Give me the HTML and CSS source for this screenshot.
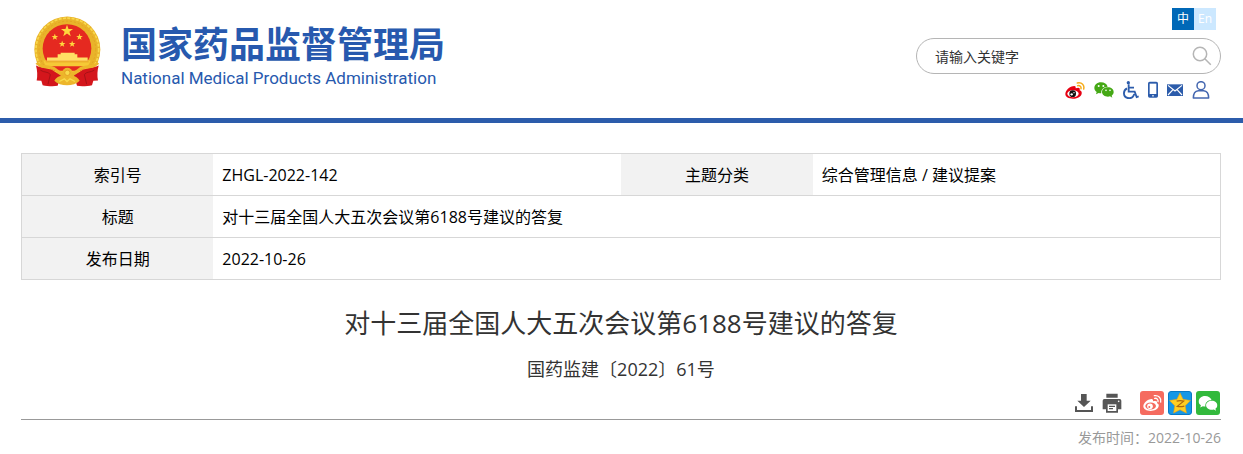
FILE: index.html
```html
<!DOCTYPE html>
<html lang="zh-CN">
<head>
<meta charset="utf-8">
<title>国家药品监督管理局</title>
<link rel="stylesheet" href="styles.css">
</head>
<body>
<svg width="0" height="0" class="defs" aria-hidden="true">
  <symbol id="star" viewBox="-10 -10 20 20"><path d="M0-10 2.4-3.2 9.5-3.1 3.8 1.3 5.9 8.1 0 4-5.9 8.1-3.8 1.3-9.5-3.1-2.4-3.2Z"/></symbol>
  <symbol id="wechat" viewBox="0 0 60 48">
    <path d="M21 1C9 1 1 9 1 18c0 5 3 9 7 12l-2 7 8-4c3 1 5 1 8 1C20 23 29 14 41 14 39 6 31 1 21 1Z"/>
    <path d="M42 16c-10 0-18 6-18 14s8 14 18 14c2 0 4 0 6-1l7 4-2-6c4-3 6-7 6-11 0-8-8-14-17-14Z"/>
    <g class="eye"><circle cx="14" cy="12" r="3"/><circle cx="28" cy="12" r="3"/><circle cx="36" cy="25" r="2.5"/><circle cx="48" cy="25" r="2.5"/></g>
  </symbol>
</svg>
<header class="site-header">
  <a class="brand" href="#">
    <svg class="emblem" viewBox="24 24 204 212" aria-hidden="true">
      <circle cx="127" cy="124" r="99" fill="#e9b32a"/>
      <circle cx="127" cy="124" r="94" fill="none" stroke="#f8d84c" stroke-width="5" stroke-dasharray="9 4"/>
      <circle cx="127" cy="124" r="85" fill="none" stroke="#e3a622" stroke-width="3" stroke-dasharray="6 6"/>
      <circle cx="126" cy="121" r="73" fill="#e52920"/>
      <path d="M55 157h142c-8 20-17 29-33 37H86c-15-8-25-19-31-37Z" fill="#f6c936"/>
      <path d="M98 148v-10h9v-4h42v4h8v10h31v10H66v-10Z" fill="#ffe064"/>
      <path d="M62 161h129" stroke="#e9a42a" stroke-width="3"/>
      <path d="M65 174h123l-22 14H88Z" fill="#e52920"/>
      <g fill="#ffd83d">
        <use href="#star" x="107" y="49" width="38" height="39"/>
        <use href="#star" x="79" y="76" width="21" height="21"/><use href="#star" x="153" y="76" width="21" height="21"/>
        <use href="#star" x="101" y="97" width="21" height="21"/><use href="#star" x="131" y="97" width="21" height="21"/>
      </g>
      <path d="M33 172c14 8 30 8 46 12l28 18-9 31c-14 2-32 1-45-2l-4-13-14-1c3-14 2-30-2-45Z" fill="#d4161c"/>
      <path d="M221 172c-14 8-30 8-46 12l-28 18 9 31c14 2 32 1 45-2l4-13 14-1c-3-14-2-30 2-45Z" fill="#d4161c"/>
      <path d="M46 186c12 8 22 3 30 13l-7 29M208 186c-12 8-22 3-30 13l7 29" fill="none" stroke="#a81216" stroke-width="3"/>
      <path d="M35 164c14 17 40 7 55 19 8 6 14 13 25 13M219 164c-14 17-40 7-55 19-8 6-14 13-25 13" fill="none" stroke="#edb62b" stroke-width="9"/>
      <circle cx="127" cy="194" r="15" fill="#edb62b"/>
      <circle cx="127" cy="194" r="8" fill="#f9da4c" stroke="#e5a126" stroke-width="3"/>
      <path d="M88 218c8-16 24-18 38-9 14-9 30-7 38 9-17 18-59 18-76 0Z" fill="#edb62b"/>
      <path d="M103 220l15-8 8 8 9-8 15 8" fill="none" stroke="#f9da4c" stroke-width="4"/>
    </svg>
    <span class="brand-text">
      <span class="brand-cn">国家药品监督管理局</span>
      <span class="brand-en">National Medical Products Administration</span>
    </span>
  </a>
  <div class="tools">
    <nav class="lang"><a class="on" href="#">中</a><a href="#">En</a></nav>
    <form class="search">
      <input type="text" aria-label="搜索" placeholder="请输入关键字">
      <button type="button" aria-label="搜索"><svg viewBox="0 0 20 20"><circle cx="8" cy="8" r="6.7"/><path d="m12.5 12.5 6.3 6.3"/></svg></button>
    </form>
    <nav class="quick">
      <a href="#" aria-label="微博"><svg width="20" height="18" viewBox="0 0 60 54">
        <path d="M25 16c5-2 8 1 7 6 9-3 14-2 12 6 5 2 7 5 6 10-2 10-15 15-26 15C11 53 1 48 1 39c0-11 16-25 24-23Z" fill="#e60012"/>
        <ellipse cx="24" cy="38" rx="17" ry="10.5" fill="#fff"/><circle cx="23" cy="38" r="10" fill="#111"/><circle cx="20" cy="40" r="3.5" fill="#fff"/><circle cx="27" cy="35" r="2" fill="#fff"/>
        <path d="M37 6c14-3 22 7 19 18M38 14c7-1 11 3 10 9" fill="none" stroke="#f6ac19" stroke-width="4.5" stroke-linecap="round"/></svg></a>
      <a class="green" href="#" aria-label="微信"><svg width="20" height="16"><use href="#wechat"/></svg></a>
      <a href="#" aria-label="无障碍"><svg width="16" height="18" viewBox="0 0 48 54" fill="none" stroke="#2c5cab" stroke-width="5.5"><circle cx="16" cy="5" r="5" fill="#2c5cab" stroke="none"/><path d="M17 10v22h18l6 16 6-2M17 20h16M12 22C-1 29 0 48 14 51c9 2 17-3 20-12"/></svg></a>
      <a href="#" aria-label="手机"><svg width="10" height="18" viewBox="0 0 30 54"><rect y="2" width="30" height="48" rx="5" fill="#2c5cab"/><path d="M5 8h20v31H5z" fill="#fff"/><circle cx="15" cy="44.500" r="2.500" fill="#fff"/></svg></a>
      <a href="#" aria-label="邮箱"><svg width="16" height="18" viewBox="0 0 48 54"><path d="M0 10h48v35H0z" fill="#2c5cab"/><path d="m3 13 21 17 21-17M3 42l15-16M45 42 30 26" fill="none" stroke="#fff" stroke-width="3.500"/></svg></a>
      <a href="#" aria-label="用户"><svg width="18" height="18" viewBox="0 0 54 54" fill="none" stroke="#4467b0" stroke-width="4.500"><circle cx="27" cy="14" r="12"/><path d="M4 51c0-15 5-21 15-22h16c10 1 15 7 15 22Z" stroke-linejoin="round"/></svg></a>
    </nav>
  </div>
</header>
<main class="page">
  <table class="info">
    <colgroup><col class="col-label"><col class="col-value"><col class="col-label"><col class="col-value"></colgroup>
    <tr><th scope="row">索引号</th><td>ZHGL-2022-142</td><th scope="row">主题分类</th><td>综合管理信息 / 建议提案</td></tr>
    <tr><th scope="row">标题</th><td colspan="3">对十三届全国人大五次会议第6188号建议的答复</td></tr>
    <tr><th scope="row">发布日期</th><td colspan="3">2022-10-26</td></tr>
  </table>
  <h1>对十三届全国人大五次会议第6188号建议的答复</h1>
  <p class="doc-no">国药监建〔2022〕61号</p>
  <div class="actions">
    <div class="file-actions">
      <button type="button" aria-label="下载"><svg viewBox="0 0 60 60"><path d="M21 3h17v20h12L30 42 10 23h11Z"/><path d="M3 40h6v11h42V40h6v17H3Z"/></svg></button>
      <button type="button" aria-label="打印"><svg viewBox="0 0 60 60"><path d="M13 2h34v12H13zM7 18h46q5 0 5 5v26H2V23q0-5 5-5ZM12 34h36v25H12z"/><path d="M17 34h26v20H17z" fill="#fff"/><path d="M21 40h18M21 47h12" stroke="#555" stroke-width="3.500"/><circle cx="50" cy="25" r="2.500" fill="#fff"/></svg></button>
    </div>
    <div class="share">
      <a class="weibo" href="#" aria-label="分享到微博"><svg viewBox="0 0 72 72"><path d="M31 25c6-3 9 0 8 6 9-3 14-1 12 6 5 2 6 5 5 9-2 9-13 14-24 14-13 0-22-6-22-14 0-9 12-20 21-21Z" fill="#fff"/><ellipse cx="32" cy="45" rx="16" ry="10.500" fill="#f56b5f"/><circle cx="30" cy="46" r="8.500" fill="#fff"/><circle cx="28" cy="48" r="3" fill="#f56b5f"/><path d="M43 14c13-2 22 8 19 19M44 22c7-1 11 4 10 10" fill="none" stroke="#fff" stroke-width="4" stroke-linecap="round"/></svg></a>
      <a class="qzone" href="#" aria-label="分享到QQ空间"><svg viewBox="0 0 72 72"><path d="m36 3 10 21 24 4-17 17 4 24-21-11-21 11 4-24L2 28l24-4Z" fill="#ffce22" stroke="#e9a417" stroke-width="2" stroke-linejoin="round"/><path d="M25 30c8-2 15-2 23 0L27 47c8 2 16 1 23-1" fill="none" stroke="#ad6610" stroke-width="4"/></svg></a>
      <a class="wx" href="#" aria-label="分享到微信"><svg viewBox="0 0 72 72"><use href="#wechat" x="7" y="13" width="58" height="48"/></svg></a>
    </div>
  </div>
  <p class="published">发布时间：2022-10-26</p>
</main>
</body>
</html>
```
FILE: styles.css
```css
* { box-sizing: border-box; }
body {
  margin: 0;
  background: #fff;
  color: #000;
  font: 16px/24px "Open Sans", "Noto Sans CJK SC", sans-serif;
}
a { color: inherit; text-decoration: none; }
svg { display: block; }
button { padding: 0; border: 0; background: none; cursor: pointer; }
.defs { position: absolute; }

.site-header {
  display: flex;
  justify-content: space-between;
  align-items: flex-start;
  padding: 8px 22px 19px 33px;
  border-bottom: 5px solid #2c5cab;
}
.brand { display: flex; align-items: flex-start; gap: 20px; padding-top: 8px; color: #2759ae; }
.emblem { width: 68px; height: 71px; }
.brand-text { display: flex; flex-direction: column; }
.brand-cn { font: 700 36px/52px "Noto Sans CJK SC", sans-serif; }
.brand-en { font: 17px/20px Roboto, sans-serif; }

.tools { display: flex; flex-direction: column; align-items: flex-end; }
.lang { display: flex; padding-right: 5px; font-size: 12px; line-height: 22px; text-align: center; color: #fff; }
.lang a { width: 22px; background: #cce8ff; }
.lang .on { background: #0068b7; }
.search {
  display: flex;
  align-items: center;
  width: 305px;
  height: 36px;
  margin-top: 8px;
  padding: 0 8px 0 18px;
  border: 1px solid #b5b5b5;
  border-radius: 18px;
}
.search input {
  flex: 1;
  min-width: 0;
  padding: 0;
  border: 0;
  outline: 0;
  background: none;
  font: 14px/20px "Noto Sans CJK SC", sans-serif;
}
.search input::placeholder { color: #333; opacity: 1; }
.search svg { width: 20px; height: 20px; fill: none; stroke: #b5b5b5; stroke-width: 1.5; }
.quick { display: flex; align-items: center; gap: 9px; padding: 7px 11px 0 0; }
.green { fill: #45a815; }
.eye { fill: #fff; }

.page { padding: 30px 22px 0 21px; }
.info { width: 100%; border: 1px solid #d7d7d7; border-collapse: collapse; table-layout: fixed; }
.info tr { border-bottom: 1px solid #d7d7d7; }
.col-label { width: 16%; }
.col-value { width: 34%; }
.info th { background: #f2f2f2; font-weight: 400; text-align: center; }
.info th, .info td { height: 42px; padding: 8px; }
.info td { text-align: left; padding-left: 9px; }
h1 { margin: 23px 0 0; color: #333; font-size: 26px; line-height: 40px; font-weight: 400; text-align: center; }
.doc-no { margin: 12px 0 0; color: #333; font-size: 18px; line-height: 28px; text-align: center; }
.actions {
  display: flex;
  justify-content: flex-end;
  align-items: center;
  gap: 18px;
  padding: 8px 0 4px;
  border-bottom: 1px solid #999;
}
.file-actions { display: flex; gap: 8px; fill: #555; }
.file-actions svg { width: 20px; height: 20px; }
.share { display: flex; gap: 4px; padding-right: 1px; }
.share a { width: 24px; height: 24px; border-radius: 3px; overflow: hidden; }
.weibo { background: #f56b5f; }
.qzone { background: #1597e6; border: 1px solid #0879c4; }
.wx { background: #32b93c; fill: #fff; }
.wx .eye { fill: #32b93c; }
.published { margin: 8px 0 0; color: #999; font-size: 14px; line-height: 20px; text-align: right; }
```
